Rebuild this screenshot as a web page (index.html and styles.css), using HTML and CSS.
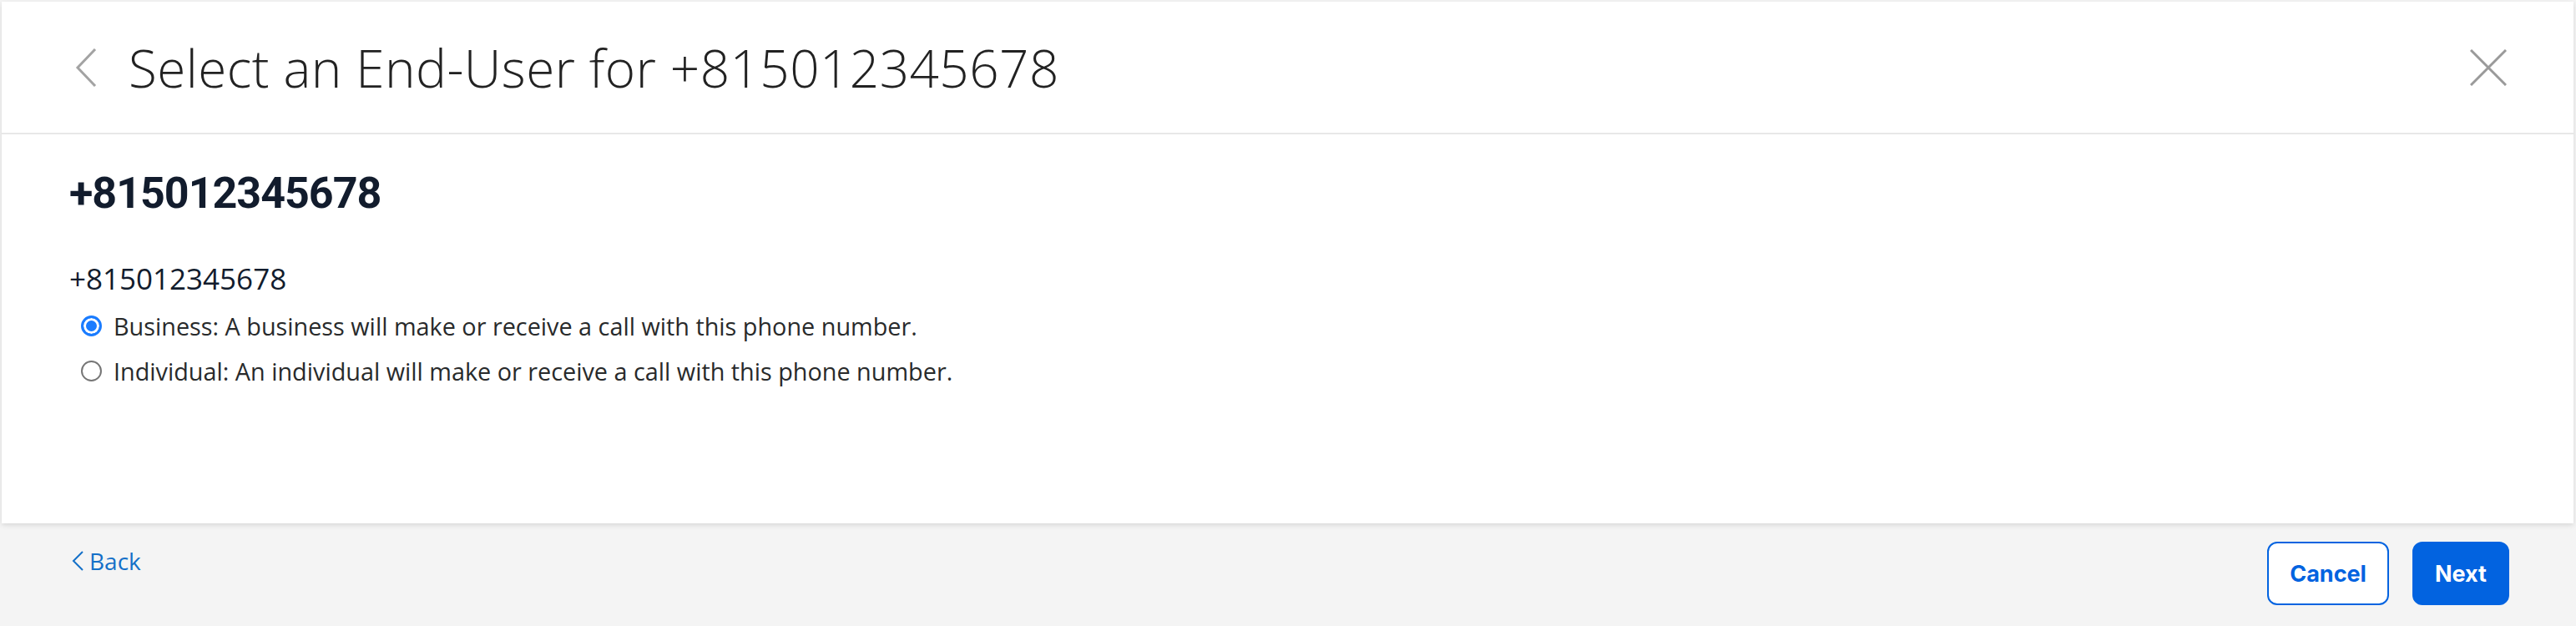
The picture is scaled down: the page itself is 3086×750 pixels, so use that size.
FILE: index.html
```html
<!DOCTYPE html>
<html lang="en">
<head>
    <meta charset="UTF-8">
    <meta name="viewport" content="width=device-width, initial-scale=1.0">
    <title>Select an End-User</title>
    <link rel="stylesheet" href="styles.css">
</head>
<body>
    <div class="modal">
        <div class="modal-header">
            <div class="header-left">
                <a href="#" class="header-back">
                    <svg width="26" height="46" viewBox="0 0 26 46"><path d="M24 1 L3 23 L24 45" fill="none" stroke="#a3a3a3" stroke-width="3"/></svg>
                </a>
                <h1 class="modal-title">Select an End-User for +815012345678</h1>
            </div>
            <a href="#" class="header-close">
                <svg width="44" height="44" viewBox="0 0 44 44"><path d="M1 1 L43 43 M43 1 L1 43" fill="none" stroke="#9a9a9a" stroke-width="3"/></svg>
            </a>
        </div>
        <div class="modal-body">
            <h2 class="number-heading">+815012345678</h2>
            <div class="number-label">+815012345678</div>
            <div class="radio-group">
                <label class="radio-row">
                    <input type="radio" name="enduser" checked>
                    <span>Business: A business will make or receive a call with this phone number.</span>
                </label>
                <label class="radio-row">
                    <input type="radio" name="enduser">
                    <span>Individual: An individual will make or receive a call with this phone number.</span>
                </label>
            </div>
        </div>
    </div>
    <div class="footer">
        <a href="#" class="back-link">
            <svg width="14" height="24" viewBox="0 0 14 24"><path d="M13 1 L2 12 L13 23" fill="none" stroke="#1470c8" stroke-width="2"/></svg>
            Back
        </a>
        <div class="buttons">
            <button class="btn btn-secondary">Cancel</button>
            <button class="btn btn-primary">Next</button>
        </div>
    </div>
</body>
</html>
```

FILE: styles.css
```css
body {
    background-color: #f4f4f4;
    margin: 0;
    padding: 0;
    font-family: "Open Sans", sans-serif;
}

.modal {
    margin: 2px 3px 0 2px;
    background-color: #fff;
    box-shadow: 0 2px 6px rgba(0, 0, 0, 0.12);
}

.modal-header {
    display: flex;
    align-items: center;
    justify-content: space-between;
    height: 157px;
    padding: 0 80px 0 88px;
    border-bottom: 2px solid #e8e8e8;
}

.header-left {
    display: flex;
    align-items: center;
}

.header-back, .header-close {
    display: flex;
}

.modal-title {
    margin: 0 0 0 38px;
    font-size: 62px;
    font-weight: 300;
    letter-spacing: 0.45px;
    color: #222;
}

.modal-body {
    height: 426px;
    padding: 40px 80px 0 81px;
}

.number-heading {
    margin: 0;
    font-family: Roboto, sans-serif;
    font-size: 52px;
    font-weight: 700;
    letter-spacing: -1px;
    color: #121c2d;
}

.number-label {
    margin-top: 48px;
    font-size: 35px;
    color: #121c2d;
}

.radio-group {
    margin-top: 6px;
}

.radio-row {
    display: flex;
    align-items: center;
    height: 54px;
    font-size: 28.8px;
    color: #282a2b;
}

.radio-row input {
    appearance: none;
    box-sizing: border-box;
    width: 25px;
    height: 25px;
    margin: 0 14px 0 14px;
    border: 2px solid #767676;
    border-radius: 50%;
    background-color: #fff;
}

.radio-row input:checked {
    border: 3px solid #1a7cff;
    background-color: #1a7cff;
    box-shadow: inset 0 0 0 3px #fff;
}

.footer {
    display: flex;
    justify-content: space-between;
    align-items: flex-start;
    padding: 22px 80px 0 86px;
}

.back-link {
    display: flex;
    align-items: center;
    gap: 7px;
    margin-top: 4px;
    font-size: 28px;
    color: #1470c8;
    text-decoration: none;
}

.buttons {
    display: flex;
    gap: 28px;
}

.btn {
    height: 76px;
    padding: 0 25px;
    border: 2px solid #0263e0;
    border-radius: 12px;
    font-family: Inter, sans-serif;
    font-size: 27px;
    font-weight: 700;
    cursor: pointer;
}

.btn-secondary {
    background-color: #fff;
    color: #0263e0;
}

.btn-primary {
    background-color: #0263e0;
    color: #fff;
}
```
